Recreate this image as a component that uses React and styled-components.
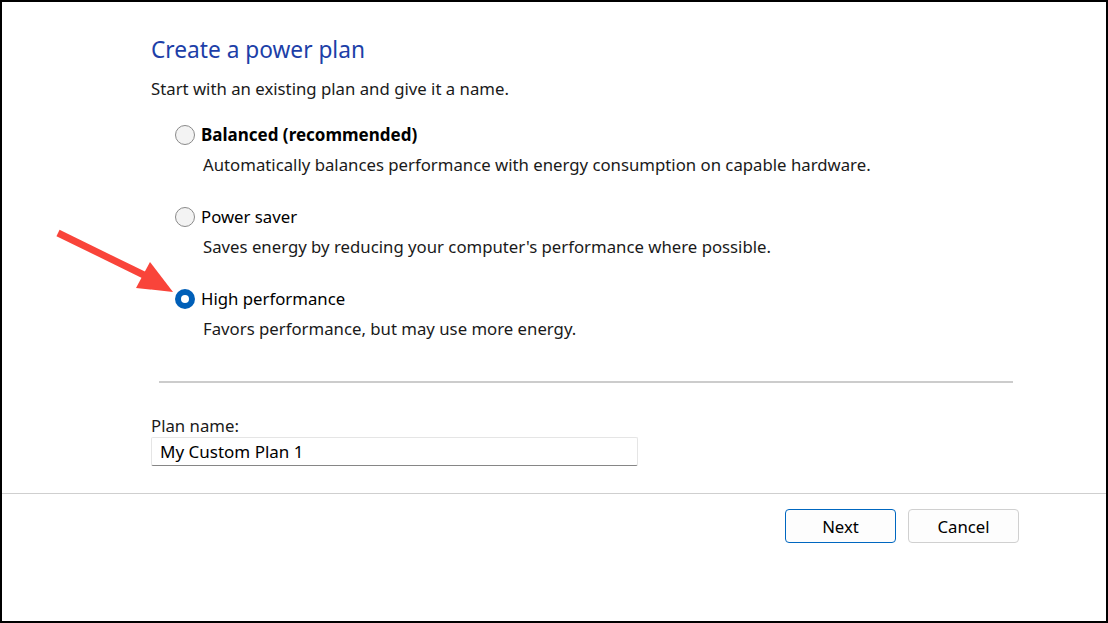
import React, { useState } from 'react';
import styled, { createGlobalStyle } from 'styled-components';

const GlobalStyle = createGlobalStyle`
  html, body {
    margin: 0;
    padding: 0;
    background: #fff;
  }
  body {
    font-family: "Noto Sans", "Open Sans", sans-serif;
    color: #1a1a1a;
  }
`;

const TEXT = '16.75px';

const Frame = styled.div`
  position: relative;
  width: 1108px;
  height: 623px;
  box-sizing: border-box;
  border: 2px solid #000;
  display: flex;
  flex-direction: column;
  background: #fff;
`;

const Main = styled.div`
  padding: 33px 0 0 149px;
`;

const Title = styled.h1`
  margin: 0;
  font-size: 22.7px;
  line-height: 30px;
  font-weight: 400;
  color: #1d3fa8;
`;

const Subtitle = styled.p`
  margin: 13px 0 0;
  font-size: ${TEXT};
  line-height: 22px;
`;

const Options = styled.div`
  margin: 23px 0 0 24px;
  display: flex;
  flex-direction: column;
  gap: 29px;
`;

const Option = styled.div`
  display: flex;
  flex-direction: column;
`;

const OptionRow = styled.label`
  display: flex;
  align-items: center;
  gap: 6px;
  height: 24px;
  cursor: pointer;
`;

const Radio = styled.span`
  box-sizing: border-box;
  width: 20px;
  height: 20px;
  border-radius: 50%;
  flex: none;
  display: flex;
  align-items: center;
  justify-content: center;
  background: ${(p) => (p.checked ? '#005fb8' : '#f3f3f3')};
  border: ${(p) => (p.checked ? 'none' : '1px solid #8a8a8a')};

  &::after {
    content: '';
    display: ${(p) => (p.checked ? 'block' : 'none')};
    width: 8px;
    height: 8px;
    border-radius: 50%;
    background: #fff;
  }
`;

const OptionLabel = styled.span`
  font-size: ${(p) => (p.bold ? '17px' : TEXT)};
  line-height: 24px;
  font-weight: ${(p) => (p.bold ? 700 : 400)};
  color: #000;
`;

const OptionDesc = styled.div`
  margin: 7px 0 0 28px;
  font-size: ${TEXT};
  line-height: 22px;
`;

const Separator = styled.hr`
  margin: 41px 0 0 8px;
  width: 854px;
  height: 2px;
  border: none;
  background: #cccccc;
`;

const FieldLabel = styled.label`
  display: block;
  margin-top: 32px;
  font-size: ${TEXT};
  line-height: 22px;
`;

const TextInput = styled.input`
  display: block;
  box-sizing: border-box;
  width: 487px;
  height: 29px;
  margin: 0;
  padding: 0 8px;
  border: 1px solid #e5e5e5;
  border-bottom-color: #868686;
  border-radius: 2px;
  font-family: "Noto Sans", "Open Sans", sans-serif;
  font-size: 17px;
  color: #000;
  background: #fff;
  outline: none;
`;

const Footer = styled.div`
  margin-top: 27px;
  border-top: 1px solid #cfcfcf;
  padding: 15px 87px 0 0;
  display: flex;
  justify-content: flex-end;
  gap: 12px;
`;

const Button = styled.button`
  box-sizing: border-box;
  width: 111px;
  height: 34px;
  border-radius: 4px;
  background: #fdfdfd;
  border: 1px solid ${(p) => (p.primary ? '#0067c0' : '#d0d0d0')};
  font-family: "Noto Sans", "Open Sans", sans-serif;
  font-size: ${TEXT};
  color: #000;
  cursor: pointer;
`;

const Annotation = styled.svg`
  position: absolute;
  left: 0;
  top: 0;
  pointer-events: none;
`;

const plans = [
  {
    id: 'balanced',
    label: 'Balanced (recommended)',
    bold: true,
    desc: 'Automatically balances performance with energy consumption on capable hardware.',
  },
  {
    id: 'saver',
    label: 'Power saver',
    desc: "Saves energy by reducing your computer's performance where possible.",
  },
  {
    id: 'high',
    label: 'High performance',
    desc: 'Favors performance, but may use more energy.',
  },
];

export default function App() {
  const [selected, setSelected] = useState('high');
  const [name, setName] = useState('My Custom Plan 1');

  return (
    <>
      <GlobalStyle />
      <Frame>
        <Main>
          <Title>Create a power plan</Title>
          <Subtitle>Start with an existing plan and give it a name.</Subtitle>
          <Options>
            {plans.map((p) => (
              <Option key={p.id}>
                <OptionRow onClick={() => setSelected(p.id)}>
                  <Radio checked={selected === p.id} />
                  <OptionLabel bold={p.bold}>{p.label}</OptionLabel>
                </OptionRow>
                <OptionDesc>{p.desc}</OptionDesc>
              </Option>
            ))}
          </Options>
          <Separator />
          <FieldLabel htmlFor="plan-name">Plan name:</FieldLabel>
          <TextInput
            id="plan-name"
            value={name}
            onChange={(e) => setName(e.target.value)}
          />
        </Main>
        <Footer>
          <Button primary>Next</Button>
          <Button>Cancel</Button>
        </Footer>
        <Annotation width="200" height="320" viewBox="2 2 200 320">
          <line x1="58" y1="233" x2="148" y2="277" stroke="#f9443a" strokeWidth="7" strokeLinecap="butt" />
          <polygon points="173,292 150,262 136,288" fill="#f9443a" />
        </Annotation>
      </Frame>
    </>
  );
}
